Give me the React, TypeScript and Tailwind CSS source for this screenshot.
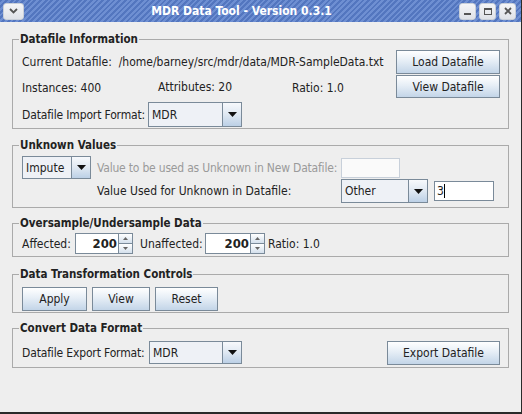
import React from 'react'

const font = "font-['DejaVu_Sans_Condensed','DejaVu_Sans',sans-serif] whitespace-nowrap"

function Btn({ label, className = '' }: { label: string; className?: string }) {
  return (
    <div
      className={`flex items-center justify-center border border-[#7a8a99] bg-[linear-gradient(to_bottom,#ffffff_0%,#e6eef6_45%,#c3d5e8_100%)] text-[12px] text-[#222] ${className}`}
    >
      {label}
    </div>
  )
}

function Combo({ value, className = '' }: { value: string; className?: string }) {
  return (
    <div className={`flex border border-[#7a8a99] ${className}`}>
      <div className="flex-1 flex items-center pl-[3px] bg-[#eef1f6] text-[12px] text-[#222]">{value}</div>
      <div className="w-[19px] flex items-center justify-center border-l border-[#7a8a99] bg-[linear-gradient(to_bottom,#f7f9fc_0%,#dfe8f2_50%,#bcd0e6_100%)]">
        <svg width="9" height="5" viewBox="0 0 9 5">
          <path d="M0 0 L9 0 L4.5 5 Z" fill="#111" />
        </svg>
      </div>
    </div>
  )
}

function Spinner({ value, className = '' }: { value: string; className?: string }) {
  return (
    <div className={`flex h-[21px] ${className}`}>
      <div className="flex-1 flex items-center justify-end pr-[1px] bg-white border border-[#7a8a99] border-r-0 text-[13px] font-bold text-[#222]">
        {value}
      </div>
      <div className="w-[15px] flex flex-col">
        <div className="flex-1 flex items-center justify-center border border-[#7a8a99] bg-[linear-gradient(to_bottom,#ffffff,#d4e0ec)]">
          <svg width="5" height="3" viewBox="0 0 5 3"><path d="M0 3 L5 3 L2.5 0 Z" fill="#666" /></svg>
        </div>
        <div className="flex-1 flex items-center justify-center border border-t-0 border-[#7a8a99] bg-[linear-gradient(to_bottom,#ffffff,#d4e0ec)]">
          <svg width="5" height="3" viewBox="0 0 5 3"><path d="M0 0 L5 0 L2.5 3 Z" fill="#666" /></svg>
        </div>
      </div>
    </div>
  )
}

function Section({ title, className = '', children }: { title: string; className?: string; children: React.ReactNode }) {
  return (
    <fieldset className={`border border-[#aaaaaa] pl-[9px] pr-[8px] ${className}`}>
      <legend className="-ml-[3px] px-[1px] text-[11.5px] font-bold text-[#222] leading-[14px]">{title}</legend>
      {children}
    </fieldset>
  )
}

function TitleButton({ children, className = '' }: { children: React.ReactNode; className?: string }) {
  return (
    <div className={`w-[17px] h-[17px] rounded-[3px] border border-[#c9cfd8] bg-[linear-gradient(to_bottom,#f4f5f7,#dfe2e8)] flex items-center justify-center ${className}`}>
      {children}
    </div>
  )
}

export default function App() {
  return (
    <div className={`w-[522px] h-[414px] flex flex-col bg-[#eeeeee] border-r border-b-2 border-[#2a2a2a] ${font}`}>
      <div className="h-[22px] flex items-center px-[3px] bg-[repeating-linear-gradient(135deg,#5376bf_0px,#5376bf_2px,#6e8fd2_2px,#6e8fd2_4px)]">
        <div className="w-[21px] h-[17px] rounded-[3px] border border-[#c9cfd8] bg-[linear-gradient(to_bottom,#f4f5f7,#dfe2e8)] flex items-center justify-center">
          <svg width="9" height="6" viewBox="0 0 9 6">
            <path d="M1 1 L4.5 4.5 L8 1" stroke="#555" strokeWidth="1.8" fill="none" />
          </svg>
        </div>
        <div className="flex-1 text-center text-white font-bold text-[12px]">MDR Data Tool - Version 0.3.1</div>
        <div className="flex gap-[3px] mr-[2px]">
          <TitleButton>
            <div className="w-[7px] h-[2px] bg-[#555] mt-[5px]" />
          </TitleButton>
          <TitleButton>
            <div className="w-[8px] h-[7px] border border-[#555] border-t-[2px]" />
          </TitleButton>
          <TitleButton>
            <svg width="8" height="8" viewBox="0 0 8 8">
              <path d="M1 1 L7 7 M7 1 L1 7" stroke="#555" strokeWidth="1.8" />
            </svg>
          </TitleButton>
        </div>
      </div>

      <div className="flex-1 flex flex-col px-[12px] pt-[10px] text-[12px] text-[#222]">
        <Section title="Datafile Information" className="pb-[1px]">
          <div className="flex items-center justify-between h-[24px] mt-[4px]">
            <span>Current Datafile:&nbsp; /home/barney/src/mdr/data/MDR-SampleData.txt</span>
            <Btn label="Load Datafile" className="w-[104px] h-[24px]" />
          </div>
          <div className="flex items-center h-[23px] mt-[1px]">
            <span className="w-[136px] pt-[3px]">Instances: 400</span>
            <span className="w-[134px] pt-[1px]">Attributes: 20</span>
            <span className="pt-[3px]">Ratio: 1.0</span>
            <Btn label="View Datafile" className="w-[104px] h-[23px] ml-auto" />
          </div>
          <div className="flex items-center h-[25px] mt-[4px]">
            <span className="w-[126px] tracking-[-0.15px]">Datafile Import Format:</span>
            <Combo value="MDR" className="w-[94px] h-[25px]" />
          </div>
        </Section>

        <Section title="Unknown Values" className="mt-[9px] pb-[4px]">
          <div className="grid grid-cols-[75px_244px_auto] items-center">
            <Combo value="Impute" className="w-[69px] h-[23px] mt-[4px]" />
            <span className="text-[#9a9a9a] mt-[4px] tracking-[-0.2px]">Value to be used as Unknown in New Datafile:</span>
            <div className="w-[59px] h-[20px] bg-[#fafafa] border border-[#c8d0da] mt-[4px]" />
            <div />
            <span>Value Used for Unknown in Datafile:</span>
            <div className="flex items-center">
              <Combo value="Other" className="w-[87px] h-[24px]" />
              <div className="w-[60px] h-[20px] ml-[6px] bg-white border border-[#7a8a99] flex items-center pl-[2px]">
                3<span className="w-[1px] h-[14px] bg-black" />
              </div>
            </div>
          </div>
        </Section>

        <Section title="Oversample/Undersample Data" className="mt-[8px] pb-[2px]">
          <div className="flex items-center h-[21px] mt-[3px]">
            <span className="w-[53px]">Affected:</span>
            <Spinner value="200" className="w-[58px]" />
            <span className="w-[65px] ml-[7px]">Unaffected:</span>
            <Spinner value="200" className="w-[60px]" />
            <span className="ml-[3px]">Ratio: 1.0</span>
          </div>
        </Section>

        <Section title="Data Transformation Controls" className="mt-[10px] pb-[1px] pl-[8px]">
          <div className="flex gap-[5px] mt-[6px]">
            <Btn label="Apply" className="w-[65px] h-[24px]" />
            <Btn label="View" className="w-[58px] h-[24px]" />
            <Btn label="Reset" className="w-[63px] h-[24px]" />
          </div>
        </Section>

        <Section title="Convert Data Format" className="mt-[8px] pb-[3px]">
          <div className="flex items-center h-[23px] mt-[6px]">
            <span className="w-[127px] tracking-[-0.15px]">Datafile Export Format:</span>
            <Combo value="MDR" className="w-[93px] h-[23px]" />
            <Btn label="Export Datafile" className="w-[113px] h-[24px] ml-auto" />
          </div>
        </Section>
      </div>
    </div>
  )
}
